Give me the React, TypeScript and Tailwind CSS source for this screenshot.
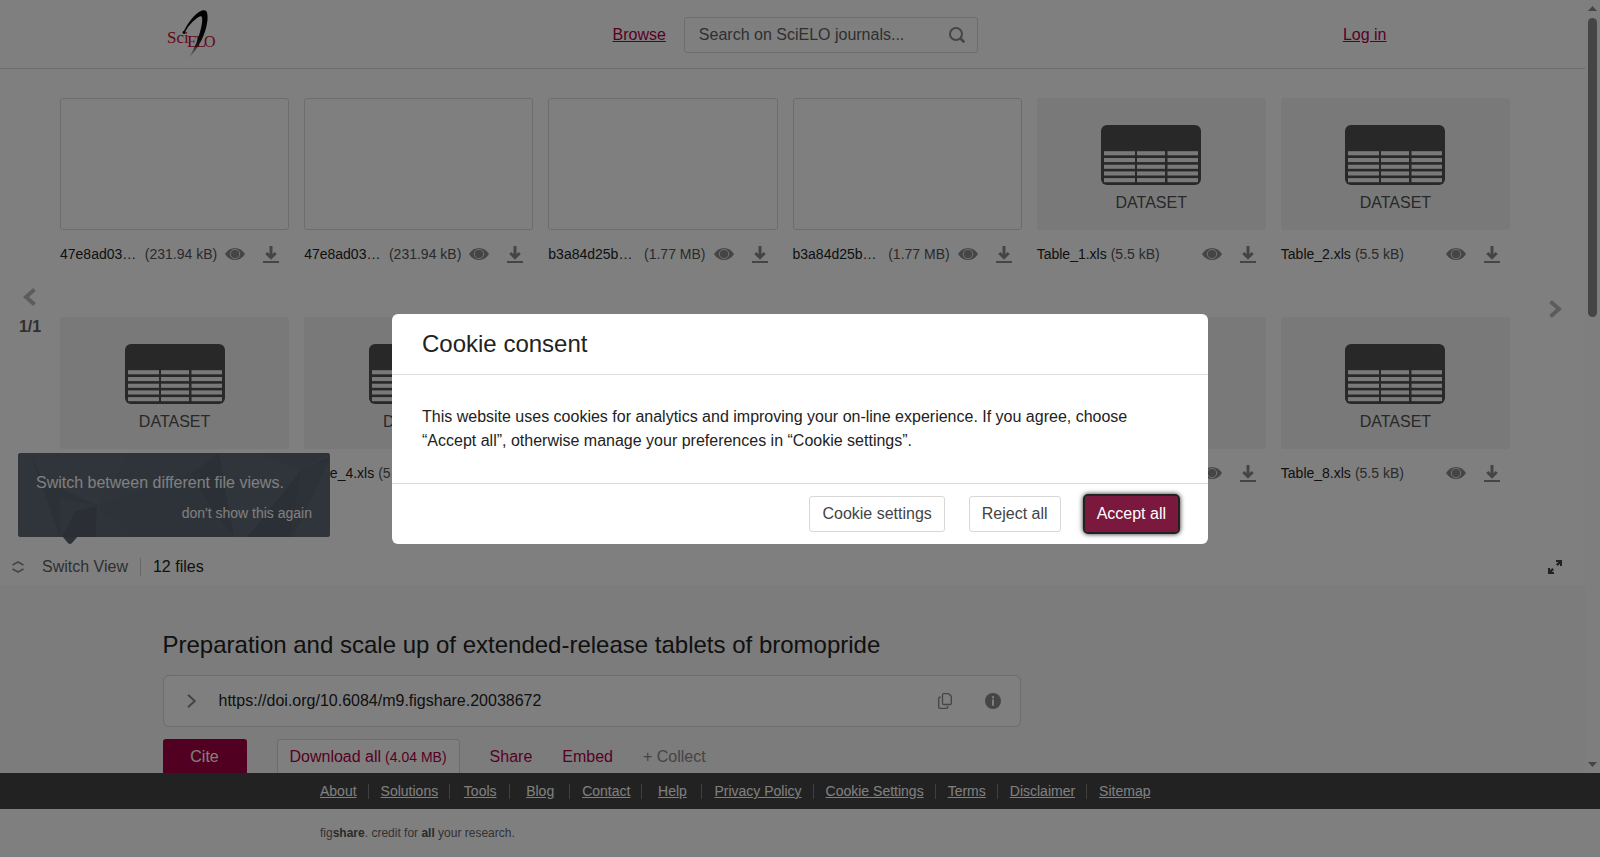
import React from "react";

type FileItem = { name: string; size: string; dataset: boolean };

const files: FileItem[] = [
  { name: "47e8ad03…", size: "(231.94 kB)", dataset: false },
  { name: "47e8ad03…", size: "(231.94 kB)", dataset: false },
  { name: "b3a84d25b…", size: "(1.77 MB)", dataset: false },
  { name: "b3a84d25b…", size: "(1.77 MB)", dataset: false },
  { name: "Table_1.xls", size: "(5.5 kB)", dataset: true },
  { name: "Table_2.xls", size: "(5.5 kB)", dataset: true },
  { name: "Table_3.xls", size: "(5.5 kB)", dataset: true },
  { name: "Table_4.xls", size: "(5.5 kB)", dataset: true },
  { name: "Table_5.xls", size: "(5.5 kB)", dataset: true },
  { name: "Table_6.xls", size: "(5.5 kB)", dataset: true },
  { name: "Table_7.xls", size: "(5.5 kB)", dataset: true },
  { name: "Table_8.xls", size: "(5.5 kB)", dataset: true },
];

const footerLinks = [
  "About",
  "Solutions",
  "Tools",
  "Blog",
  "Contact",
  "Help",
  "Privacy Policy",
  "Cookie Settings",
  "Terms",
  "Disclaimer",
  "Sitemap",
];

function Logo() {
  return (
    <svg width="52" height="52" viewBox="0 0 52 52" role="img" aria-label="SciELO">
      <defs>
        <linearGradient id="swoosh" x1="0" y1="0" x2="0" y2="1">
          <stop offset="0" stopColor="#000" />
          <stop offset="0.6" stopColor="#111" />
          <stop offset="1" stopColor="#000" stopOpacity="0" />
        </linearGradient>
      </defs>
      <g fill="#c4122f" fontFamily="Liberation Serif, serif">
        <text x="0" y="34" fontSize="17">
          Sci
        </text>
        <text x="20" y="38" fontSize="17">
          E
        </text>
        <text x="28.500" y="38" fontSize="17">
          L
        </text>
        <text x="37" y="38" fontSize="16">
          O
        </text>
      </g>
      <path
        d="M16 24C20 15 28 4 35 1.500C39.500 0 41 3 40.500 11C39 25 32 39 21 50C28 39 33 26 34.800 15C35.800 8 35 6 31.500 8C26 11.500 20 18 17.500 24.500Z"
        fill="url(#swoosh)"
      />
      <circle cx="17" cy="23.500" r="1.400" fill="#000" />
    </svg>
  );
}

function EyeIcon() {
  return (
    <svg width="20" height="12" viewBox="0 0 20 12" aria-hidden="true">
      <path d="M0 6C2.500 2 6 0 10 0S17.500 2 20 6C17.500 10 14 12 10 12S2.500 10 0 6Z" fill="#8a8a8a" />
      <circle cx="10" cy="6" r="4.700" fill="#8a8a8a" stroke="#e6e6e6" strokeWidth="1" />
    </svg>
  );
}

function DownloadIcon() {
  return (
    <svg width="16" height="17" viewBox="0 0 16 17" aria-hidden="true">
      <path d="M8 0V12M3.300 7L8 11.700L12.700 7" fill="none" stroke="#8a8a8a" strokeWidth="3" />
      <path d="M0 15h16v2H0z" fill="#8a8a8a" />
    </svg>
  );
}

function DatasetIcon() {
  return (
    <svg width="100" height="60" viewBox="0 0 100 60" aria-hidden="true">
      <rect width="100" height="60" rx="6" fill="#505050" />
      {[26.2, 33, 39.7, 46.4, 53.1].map((y) => (
        <g key={y} fill="#f3f3f3">
          <rect x="3" y={y} width="31" height="4.100" />
          <rect x="36" y={y} width="28" height="4.100" />
          <rect x="66.500" y={y} width="30.500" height="4.100" />
        </g>
      ))}
    </svg>
  );
}

function FileCard({ file }: { file: FileItem }) {
  return (
    <li className="flex flex-col">
      {file.dataset ? (
        <div className="flex h-[132px] flex-col items-center rounded-[3px] bg-[#f3f3f3] pt-[27px]">
          <DatasetIcon />
          <span className="mt-1.5 text-base leading-6 text-[#505050]">DATASET</span>
        </div>
      ) : (
        <div className="h-[132px] rounded-[3px] border border-[#d8d8d8]" />
      )}
      <div className="mt-[14px] flex h-5 items-center pr-[10px] text-sm">
        <div className="flex flex-1 gap-1 whitespace-nowrap">
          <span className={file.dataset ? "text-[#222]" : "flex-1 text-[#222]"}>{file.name}</span>
          <span className="text-[#555]">{file.size}</span>
        </div>
        <button type="button" aria-label={"Preview " + file.name} className="ml-2">
          <EyeIcon />
        </button>
        <button type="button" aria-label={"Download " + file.name} className="ml-[18px]">
          <DownloadIcon />
        </button>
      </div>
    </li>
  );
}

function ViewHint() {
  return (
    <div className="absolute bottom-[48px] left-[18px] h-[84px] w-[312px] text-white">
      <svg className="absolute inset-0" width="312" height="92" viewBox="0 0 312 92" aria-hidden="true">
        <defs>
          <clipPath id="hint">
            <rect width="312" height="84" rx="3" />
          </clipPath>
        </defs>
        <path d="M44 83h16l-6 7q-2 2-4 0z" fill="#586470" />
        <g clipPath="url(#hint)">
          <rect width="312" height="84" fill="#5b6773" />
          <path d="M0 0H12L44 84H0Z" fill="#5f6a77" />
          <path d="M12 0L79 53L42 45V84Z" fill="#58626e" />
          <path d="M12 0H112L90 42L79 53L24 26Z" fill="#5f6a76" />
          <path d="M112 0H201L174 20L79 53Z" fill="#5d6875" />
          <path d="M42 45L79 53L57 58L44 84Z" fill="#5f6975" />
          <path d="M57 58L79 53L78 84H44Z" fill="#565f6a" />
          <path d="M79 53L115 84H78Z" fill="#5d6874" />
          <path d="M201 0L174 20L190 50L216 84Z" fill="#57606c" />
          <path d="M201 0H312V4L283 17L230 84H216Z" fill="#5f6a76" />
          <path d="M240 0L283 17L312 0Z" fill="#5a6673" />
          <path d="M312 4L283 17L265 40L229 84H275Z" fill="#57606c" />
          <path d="M283 17L272 84H276L312 6Z" fill="#5a646f" />
          <path d="M312 6L275 84H312Z" fill="#606b77" />
        </g>
      </svg>
      <div className="relative flex flex-col px-[18px] pt-[18px]">
        <span className="text-base leading-6">Switch between different file views.</span>
        <button type="button" className="mt-2 self-end text-sm leading-5">
          don't show this again
        </button>
      </div>
    </div>
  );
}

function Header() {
  return (
    <header className="border-b border-[#d8d8d8]">
      <div className="mx-auto flex h-[68px] max-w-[1260px] items-center pt-px">
        <a href="#home" className="ml-1 shrink-0">
          <Logo />
        </a>
        <a href="#browse" className="ml-[394px] text-base text-[#b00048] underline">
          Browse
        </a>
        <div className="ml-[18px] flex h-9 w-[294px] items-center rounded-[3px] border border-[#d8d8d8] pr-[12px] pl-[14px]">
          <input
            type="text"
            aria-label="Search"
            placeholder="Search on SciELO journals..."
            className="min-w-0 flex-1 bg-transparent text-base text-[#555] outline-none placeholder:text-[#606060]"
          />
          <button type="button" aria-label="Submit search">
            <svg width="16" height="16" viewBox="0 0 16 16" fill="none" stroke="#8a8a8a" strokeWidth="2" aria-hidden="true">
              <circle cx="7" cy="7" r="6" />
              <path d="M11 11l4.300 4.300" strokeWidth="2.600" />
            </svg>
          </button>
        </div>
        <a href="#login" className="mr-9 ml-auto text-base text-[#b00048] underline">
          Log in
        </a>
      </div>
    </header>
  );
}

function FileBrowser() {
  return (
    <section className="relative">
      <div className="flex h-[468px] pt-[29px]">
        <div className="flex w-[60px] flex-col items-center pt-[190px]">
          <button type="button" aria-label="Previous page">
            <svg width="14" height="18" viewBox="0 0 14 18" fill="none" stroke="#b8b8b8" strokeWidth="4" aria-hidden="true">
              <path d="M11.500 1.500L3 9l8.500 7.500" />
            </svg>
          </button>
          <span className="mt-[9px] text-base leading-6 font-bold text-[#606060]">1/1</span>
        </div>
        <ul className="grid flex-1 grid-cols-6 content-start gap-x-[15px] gap-y-[53px]">
          {files.map((f, i) => (
            <FileCard key={i} file={f} />
          ))}
        </ul>
        <div className="flex w-[75px] justify-center pt-[202px]">
          <button type="button" aria-label="Next page" className="h-[18px] pl-4">
            <svg width="13" height="18" viewBox="0 0 13 18" fill="none" stroke="#b8b8b8" strokeWidth="4" aria-hidden="true">
              <path d="M1.500 1.500L10 9l-8.500 7.500" />
            </svg>
          </button>
        </div>
      </div>
      <ViewHint />
      <div className="flex h-12 items-center pt-[11px] pr-[23px] pl-3 text-base">
        <button type="button" className="flex items-center text-[#606060]">
          <svg width="12" height="12" viewBox="0 0 12 12" fill="none" stroke="#8a8a8a" strokeWidth="1.600" aria-hidden="true">
            <path d="M0.500 4L6 1l5.500 3M0.500 8L6 11l5.500-3" />
          </svg>
          <span className="ml-[18px]">Switch View</span>
        </button>
        <span className="mx-3 h-[18px] w-px bg-[#d0d0d0]" />
        <span className="text-[#222]">12 files</span>
        <button type="button" aria-label="Full screen" className="ml-auto">
          <svg width="14" height="14" viewBox="0 0 14 14" fill="#444" aria-hidden="true">
            <path d="M8 0h6v6h-2V3.700L9.700 6L8 4.300L10.300 2H8zM6 14H0V8h2v2.300L4.300 8L6 9.700L3.700 12H6z" />
          </svg>
        </button>
      </div>
    </section>
  );
}

function ItemDetails() {
  return (
    <section className="flex-1 bg-[#f8f8f8] pt-[44px]">
      <div className="mx-auto max-w-[1260px]">
        <h1 className="text-2xl leading-8 text-[#222]">
          Preparation and scale up of extended-release tablets of bromopride
        </h1>
        <div className="mt-[14px] flex h-[52px] max-w-[858px] items-center rounded-md border border-[#d8d8d8] bg-white pr-[19px] pl-[23px]">
          <button type="button" aria-label="Show details">
            <svg width="9" height="14" viewBox="0 0 9 14" fill="none" stroke="#8a8a8a" strokeWidth="2" aria-hidden="true">
              <path d="M1 0.700L7.700 7L1 13.300" />
            </svg>
          </button>
          <span className="ml-[23px] text-base text-[#222]">https://doi.org/10.6084/m9.figshare.20038672</span>
          <button type="button" aria-label="Copy link" className="ml-auto">
            <svg width="14" height="16" viewBox="0 0 14 16" fill="none" stroke="#8a8a8a" strokeWidth="1.300" aria-hidden="true">
              <path d="M5.700 0.700h5l2.600 2.600v7a1.200 1.200 0 0 1-1.200 1.200H5.700a1.200 1.200 0 0 1-1.200-1.200V1.900a1.200 1.200 0 0 1 1.200-1.200z" />
              <path d="M3 4.200H1.900A1.200 1.200 0 0 0 0.700 5.400v8.700a1.200 1.200 0 0 0 1.200 1.200H8.500a1.200 1.200 0 0 0 1.200-1.200V13" />
            </svg>
          </button>
          <button type="button" aria-label="Information" className="ml-[33px]">
            <svg width="16" height="16" viewBox="0 0 16 16" aria-hidden="true">
              <circle cx="8" cy="8" r="8" fill="#8a8a8a" />
              <path d="M7 3.200h2v2H7zM7 6.500h2v6.300H7z" fill="#fff" />
            </svg>
          </button>
        </div>
        <div className="mt-3 flex h-9 items-stretch text-base text-[#b00048]">
          <button type="button" className="w-[84px] rounded-[3px] bg-[#a40044] text-white">
            Cite
          </button>
          <button type="button" className="ml-[30px] flex items-center gap-1 rounded-[3px] border border-[#d8d8d8] bg-white px-3">
            Download all <span className="text-sm">(4.04 MB)</span>
          </button>
          <button type="button" className="ml-[30px]">
            Share
          </button>
          <button type="button" className="ml-[30px]">
            Embed
          </button>
          <button type="button" className="ml-[30px] text-[#8a8a8a]">
            + Collect
          </button>
        </div>
      </div>
    </section>
  );
}

function Scrollbar() {
  return (
    <div className="flex w-[15px] shrink-0 flex-col items-center bg-[#fcfcfc] py-1.5">
      <svg width="9" height="5" viewBox="0 0 9 5" fill="#8b8b8b" aria-hidden="true">
        <path d="M0 5L4.500 0L9 5z" />
      </svg>
      <div className="my-[7px] flex-1">
        <div className="h-[299px] w-[9px] rounded-full bg-[#8b8b8b]" />
      </div>
      <svg width="9" height="5" viewBox="0 0 9 5" fill="#8b8b8b" aria-hidden="true">
        <path d="M0 0L4.500 5L9 0z" />
      </svg>
    </div>
  );
}

function Footer() {
  return (
    <footer>
      <nav className="bg-[#444]">
        <ul className="mx-auto flex h-9 max-w-[960px] items-center text-sm text-white">
          {footerLinks.map((label, i) => (
            <li
              key={label}
              className={
                i === 0
                  ? "flex h-[15px] items-center border-r border-[#808080] pr-[11px]"
                  : i === footerLinks.length - 1
                    ? "flex h-[15px] min-w-[60px] items-center justify-center px-3"
                    : "flex h-[15px] min-w-[60px] items-center justify-center border-r border-[#808080] pr-[11px] pl-3"
              }
            >
              <a href="#footer" className="whitespace-nowrap underline">
                {label}
              </a>
            </li>
          ))}
        </ul>
      </nav>
      <div className="bg-white">
        <p className="mx-auto flex h-12 max-w-[960px] items-center text-xs text-[#666]">
          <span>
            fig<b className="text-[#555]">share</b>. credit for <b className="text-[#555]">all</b> your research.
          </span>
        </p>
      </div>
    </footer>
  );
}

function CookieDialog() {
  return (
    <div className="fixed inset-0 flex items-center justify-center bg-black/50">
      <div role="dialog" aria-modal="true" aria-labelledby="cookie-title" className="w-full max-w-[816px] rounded-md bg-white text-[#222]">
        <h2 id="cookie-title" className="border-b border-[#dcdcdc] px-[30px] py-[14px] text-2xl leading-8">
          Cookie consent
        </h2>
        <p className="px-[30px] py-[30px] text-base leading-6">
          This website uses cookies for analytics and improving your on-line experience. If you agree, choose “Accept all”,
          otherwise manage your preferences in “Cookie settings”.
        </p>
        <div className="flex justify-end gap-6 border-t border-[#dcdcdc] px-[30px] py-3 text-base text-[#444]">
          <button type="button" className="h-9 rounded-[3px] border border-[#d8d8d8] px-3">
            Cookie settings
          </button>
          <button type="button" className="h-9 rounded-[3px] border border-[#d8d8d8] px-3">
            Reject all
          </button>
          <button
            type="button"
            className="h-9 rounded-[3px] bg-[#7b183d] px-3 text-white shadow-[0_0_5px_2px_#222] outline-2 outline-[#222]"
          >
            Accept all
          </button>
        </div>
      </div>
    </div>
  );
}

export default function App() {
  return (
    <div className="flex h-screen flex-col bg-white font-['Liberation_Sans',Arial,sans-serif]">
      <div className="flex min-h-0 flex-1">
        <main className="flex min-w-0 flex-1 flex-col overflow-hidden">
          <Header />
          <FileBrowser />
          <ItemDetails />
        </main>
        <Scrollbar />
      </div>
      <Footer />
      <CookieDialog />
    </div>
  );
}
